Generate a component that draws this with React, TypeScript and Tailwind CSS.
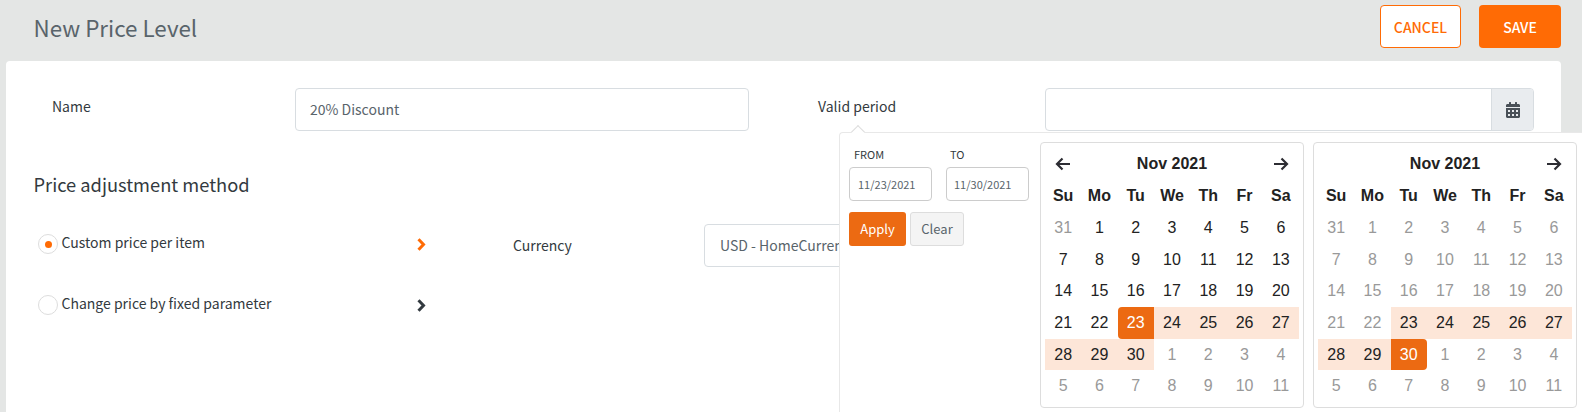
const ui = "font-['Noto_Sans_CJK_SC','Noto_Sans',sans-serif]";
const weekdays = ["Su", "Mo", "Tu", "We", "Th", "Fr", "Sa"];
const dates = [31, 1, 2, 3, 4, 5, 6, 7, 8, 9, 10, 11, 12, 13, 14, 15, 16, 17, 18, 19, 20, 21, 22, 23, 24, 25, 26, 27, 28, 29, 30, 1, 2, 3, 4, 5, 6, 7, 8, 9, 10, 11];

function Arrow({ flip }: { flip?: boolean }) {
  return (
    <svg viewBox="0 0 16 16" className={`w-4 h-4 ${flip ? "rotate-180" : ""}`} fill="none" stroke="#2d2d33" strokeWidth="2.2">
      <path d="M1 8h13M8.500 2.500 14 8l-5.500 5.500" />
    </svg>
  );
}

function Chevron({ color }: { color: string }) {
  return (
    <svg viewBox="0 0 9 13" className="w-[9px] h-[13px] mr-[7px]" fill="none" stroke={color} strokeWidth="3">
      <path d="M1.500 1.200 6.500 6.500l-5 5.300" />
    </svg>
  );
}

function Calendar({ selected, monthMuted }: { selected: number; monthMuted?: boolean }) {
  return (
    <div className="w-[264px] h-[266px] shrink-0 border border-[#dddddd] rounded-[4px] bg-white px-[4px] pt-[5px] font-['Liberation_Sans',sans-serif] text-[16px] text-[#222222]">
      <div className="grid grid-cols-7 h-[32px] items-center text-center">
        <div className="flex justify-center">{!monthMuted && <Arrow flip />}</div>
        <div className="col-span-5 font-bold">Nov 2021</div>
        <div className="flex justify-center"><Arrow /></div>
      </div>
      <div className="grid grid-cols-7 h-[32px] items-center text-center font-bold">
        {weekdays.map((d) => <div key={d}>{d}</div>)}
      </div>
      <div className="grid grid-cols-7 auto-rows-[31.700px] text-center">
        {dates.map((d, i) => {
          const inRange = i >= 23 && i <= 30;
          const outside = i < 1 || i > 30 || (monthMuted && i < 23);
          let cls = outside ? "text-[#999999]" : "";
          if (inRange) cls = "bg-[#fde6d8]";
          if (i === selected) {
            cls = selected === 23
              ? "bg-[#ec6a12] text-white rounded-l-[4px]"
              : "bg-[#ec6a12] text-white rounded-r-[4px]";
          }
          return (
            <div key={i} className={`flex items-center justify-center ${cls}`}>{d}</div>
          );
        })}
      </div>
    </div>
  );
}

export default function App() {
  return (
    <div className={`relative w-[1582px] h-[420px] overflow-hidden bg-white text-[#333a40] ${ui}`}>
      <div className="h-[412px] bg-[#e4e6e5]">
        {/* Header */}
        <div className="h-[61px] pl-[33.500px] pr-[21px] pt-[5px] flex items-start justify-between">
          <h1 className="text-[22.400px] leading-[44px] text-[#59646b]">New Price Level</h1>
          <div className="flex gap-[18px]">
            <button className="w-[81px] h-[43px] pt-[1px] border border-[#ff6b05] rounded-[4px] bg-white text-[#ff6b05] text-[14px] font-medium">CANCEL</button>
            <button className="w-[82px] h-[43px] pt-[1px] rounded-[4px] bg-[#ff6b05] text-white text-[14px] font-medium">SAVE</button>
          </div>
        </div>

        {/* Card */}
        <div className="ml-[6px] mr-[21px] h-[351px] bg-white rounded-t-[4px] pl-[28px] pt-[27px]">
          <div className="flex items-start text-[14px]">
            <div className="w-[261px] pl-[18px] pt-[7px] leading-[22px]">Name</div>
            <div className="w-[454px] h-[43px] border border-[#d8dde1] rounded-[4px] pl-[14px] flex items-center text-[#59646b]">20% Discount</div>
            <div className="w-[69px]" />
            <div className="w-[227px] pt-[7px] leading-[22px]">Valid period</div>
            <div className="w-[489px] h-[43px] border border-[#d8dde1] rounded-[4px] flex justify-end overflow-hidden">
              <div className="w-[42px] bg-[#e9ecef] border-l border-[#d8dde1] flex items-center justify-center">
                <svg viewBox="0 0 448 512" className="w-[14px] h-[16px]" fill="#495057">
                  <path d="M0 464c0 26.500 21.500 48 48 48h352c26.500 0 48-21.500 48-48V192H0v272zm320-196c0-6.600 5.400-12 12-12h40c6.600 0 12 5.400 12 12v40c0 6.600-5.400 12-12 12h-40c-6.600 0-12-5.400-12-12v-40zm0 128c0-6.600 5.400-12 12-12h40c6.600 0 12 5.400 12 12v40c0 6.600-5.400 12-12 12h-40c-6.600 0-12-5.400-12-12v-40zM192 268c0-6.600 5.400-12 12-12h40c6.600 0 12 5.400 12 12v40c0 6.600-5.400 12-12 12h-40c-6.600 0-12-5.400-12-12v-40zm0 128c0-6.600 5.400-12 12-12h40c6.600 0 12 5.400 12 12v40c0 6.600-5.400 12-12 12h-40c-6.600 0-12-5.400-12-12v-40zM64 268c0-6.600 5.400-12 12-12h40c6.600 0 12 5.400 12 12v40c0 6.600-5.400 12-12 12H76c-6.600 0-12-5.400-12-12v-40zm0 128c0-6.600 5.400-12 12-12h40c6.600 0 12 5.400 12 12v40c0 6.600-5.400 12-12 12H76c-6.600 0-12-5.400-12-12v-40zM400 64h-48V16c0-8.800-7.200-16-16-16h-32c-8.800 0-16 7.200-16 16v48H160V16c0-8.800-7.200-16-16-16h-32c-8.800 0-16 7.200-16 16v48H48C21.500 64 0 85.500 0 112v48h448v-48c0-26.500-21.500-48-48-48z" />
                </svg>
              </div>
            </div>
          </div>

          <h2 className="mt-[38px] -ml-[0.500px] text-[18.300px] leading-[30px] text-[#333a40]">Price adjustment method</h2>

          <div className="mt-[25px] flex items-start text-[14px]">
            <div className="w-[399px] pl-[4px] pt-[10px]">
              <div className="flex items-center h-[20px]">
                <span className="w-[20px] h-[20px] rounded-full border border-[#dddddd] flex items-center justify-center">
                  <span className="w-[7px] h-[7px] rounded-full bg-[#ff6b05]" />
                </span>
                <span className="ml-[3.500px] -mt-[4px] flex-1">Custom price per item</span>
                <Chevron color="#ff6b05" />
              </div>
              <div className="flex items-center h-[20px] mt-[41px]">
                <span className="w-[20px] h-[20px] rounded-full border border-[#dddddd]" />
                <span className="ml-[3.500px] -mt-[4px] flex-1">Change price by fixed parameter</span>
                <Chevron color="#333a40" />
              </div>
            </div>
            <div className="w-[80px]" />
            <div className="w-[191px] pt-[10px] leading-[22px]">Currency</div>
            <div className="w-[300px] h-[43px] border border-[#d8dde1] rounded-[4px] pl-[15px] flex items-center text-[#59646b] whitespace-nowrap">USD - HomeCurrency</div>
          </div>

          <div className="mt-[143px] -ml-[1px] w-px h-[3px] bg-[#bbbbbb]" />
        </div>
      </div>

      {/* Date range popover */}
      <div className="absolute left-[839px] top-[132px] w-[760px] h-[280px] bg-white border-l border-t border-[#e8e8e8] rounded-tl-[4px] flex pl-[9px] pt-[9px]">
        <div className="absolute -top-[6px] left-[13px] w-[10px] h-[10px] rotate-45 bg-white border-l border-t border-[#dddddd]" />
        <div className="w-[191px] shrink-0 pt-[1px] text-[#59646b]">
          <div className="flex gap-[14px] text-[11px]">
            <div className="w-[83px]">
              <div className="pl-[5px] h-[24px] leading-[22px] text-[#333a40]">FROM</div>
              <div className="h-[34px] border border-[#cccccc] rounded-[4px] pl-[8px] flex items-center">11/23/2021</div>
            </div>
            <div className="w-[83px]">
              <div className="pl-[4px] h-[24px] leading-[22px] text-[#333a40]">TO</div>
              <div className="h-[34px] border border-[#cccccc] rounded-[4px] pl-[7px] flex items-center">11/30/2021</div>
            </div>
          </div>
          <div className="flex gap-[4px] mt-[11px] text-[13px]">
            <button className="w-[57px] h-[34px] bg-[#ec6a12] rounded-[3px] text-white">Apply</button>
            <button className="w-[54px] h-[34px] bg-[#f4f4f4] border border-[#dddddd] rounded-[3px]">Clear</button>
          </div>
        </div>
        <div className="flex gap-[9px]">
          <Calendar selected={23} />
          <Calendar selected={30} monthMuted />
        </div>
      </div>
    </div>
  );
}
